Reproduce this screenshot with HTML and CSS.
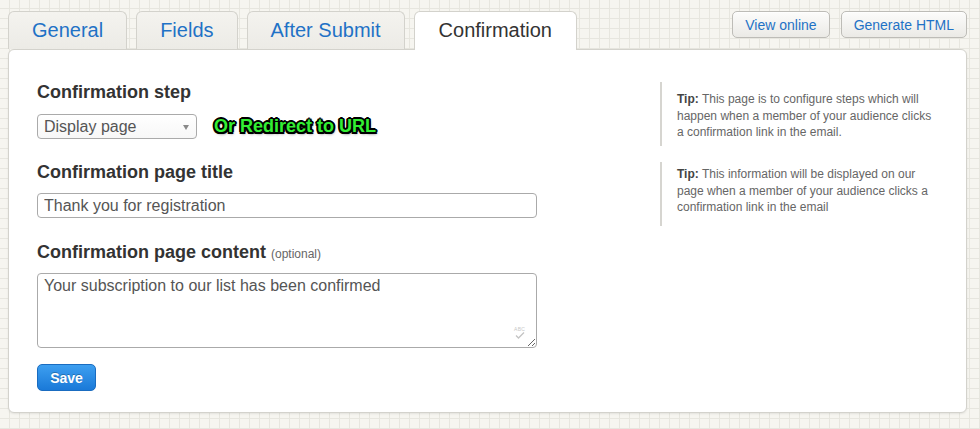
FILE: index.html
```html
<!DOCTYPE html>
<html lang="en">
<head>
<meta charset="utf-8">
<title>Confirmation</title>
<link rel="stylesheet" href="styles.css">
</head>
<body>
<div class="page">
  <div class="topbar">
    <nav class="tabs">
      <a class="tab">General</a>
      <a class="tab">Fields</a>
      <a class="tab">After Submit</a>
      <a class="tab active">Confirmation</a>
    </nav>
    <div class="actions">
      <button class="btn">View online</button>
      <button class="btn">Generate HTML</button>
    </div>
  </div>
  <section class="panel">
    <div class="form">
      <h3 class="field-label">Confirmation step</h3>
      <div class="step-row">
        <div class="select-wrap">
          <select class="select"><option>Display page</option></select>
        </div>
        <span class="redirect">Or Redirect to URL</span>
      </div>
      <h3 class="field-label">Confirmation page title</h3>
      <input class="text-input" type="text" value="Thank you for registration">
      <h3 class="field-label">Confirmation page content <span class="optional">(optional)</span></h3>
      <div class="textarea-wrap">
        <textarea class="textarea">Your subscription to our list has been confirmed</textarea>
        <span class="spell"><span class="spell-abc">ABC</span><svg width="10" height="7" viewBox="0 0 10 7"><path d="M1 3.5 L3.5 6 L9 0.5" fill="none" stroke="#c4c4c4" stroke-width="1.3"/></svg></span>
      </div>
      <button class="save">Save</button>
    </div>
    <aside class="tips">
      <p class="tip"><b>Tip:</b> This page is to configure steps which will happen when a member of your audience clicks a confirmation link in the email.</p>
      <p class="tip tip-second"><b>Tip:</b> This information will be displayed on our page when a member of your audience clicks a confirmation link in the email</p>
    </aside>
  </section>
</div>
</body>
</html>
```
FILE: styles.css
```css
* { box-sizing: border-box; }
html, body { margin: 0; padding: 0; }
body {
  font-family: "Liberation Sans", Arial, Helvetica, sans-serif;
  background-color: #f6f5f0;
  background-image:
    linear-gradient(to right, #e7e6df 1px, transparent 1px),
    linear-gradient(to bottom, #e7e6df 1px, transparent 1px);
  background-size: 10px 10px;
  background-position: 9px 8px;
  height: 429px;
  overflow: hidden;
}
.page {
  padding: 11px 13px 0 8px;
}
.topbar {
  display: flex;
  justify-content: space-between;
  align-items: flex-start;
  height: 38px;
  position: relative;
  z-index: 2;
}
.tabs {
  display: flex;
  gap: 9px;
  align-items: flex-end;
  height: 38px;
}
.tab {
  display: block;
  height: 38px;
  padding: 0 23px;
  line-height: 36px;
  font-size: 20px;
  color: #1f72c6;
  background: linear-gradient(#f4f3ef, #ecebe6);
  border: 1px solid #d3d2cc;
  border-bottom: none;
  border-radius: 6px 6px 0 0;
  cursor: pointer;
}
.tab.active {
  height: 39px;
  margin-bottom: -1px;
  background: #fff;
  color: #333;
  padding: 0 24px;
}
.actions {
  display: flex;
  gap: 11px;
}
.btn {
  height: 27px;
  padding: 0 12px;
  font-family: inherit;
  font-size: 14px;
  color: #1f72c6;
  background: linear-gradient(#fcfcfb, #ebeae6);
  border: 1px solid #bdbcb7;
  border-radius: 5px;
  box-shadow: 0 1px 0 rgba(255,255,255,0.8) inset;
  cursor: pointer;
}
.panel {
  position: relative;
  z-index: 1;
  display: flex;
  align-items: flex-start;
  background: #fff;
  border: 1px solid #d3d2cc;
  border-radius: 6px;
  padding: 32px 28px 21px 28px;
  box-shadow: 0 1px 2px rgba(0,0,0,0.08);
}
.form {
  width: 500px;
  display: flex;
  flex-direction: column;
  align-items: flex-start;
}
.field-label {
  margin: 0 0 11px 0;
  height: 20px;
  font-size: 18px;
  line-height: 20px;
  font-weight: bold;
  color: #333;
}
.optional {
  font-size: 12px;
  line-height: 12px;
  font-weight: normal;
  color: #666;
}
.step-row {
  display: flex;
  align-items: center;
  margin: 1px 0 23px 0;
}
.select-wrap {
  position: relative;
  width: 160px;
  height: 25px;
}
.select-wrap::after {
  content: "";
  position: absolute;
  right: 8px;
  top: 11px;
  border-left: 3.5px solid transparent;
  border-right: 3.5px solid transparent;
  border-top: 5px solid #8a8a8a;
  pointer-events: none;
}
.select {
  -webkit-appearance: none;
  appearance: none;
  width: 160px;
  height: 25px;
  padding: 0 20px 0 6px;
  font-family: inherit;
  font-size: 16px;
  color: #555;
  background: linear-gradient(#fff, #f7f7f7);
  border: 1px solid #aaa;
  border-radius: 4px;
}
.redirect {
  margin-left: 17px;
  font-size: 18px;
  font-weight: bold;
  letter-spacing: 0;
  color: #33ee33;
  text-shadow:
    -1.5px -1.5px 0 #000, 1.5px -1.5px 0 #000, -1.5px 1.5px 0 #000, 1.5px 1.5px 0 #000,
    0 -2px 0 #000, 0 2px 0 #000, -2px 0 0 #000, 2px 0 0 #000,
    1px 2px 3px rgba(0,0,0,0.6);
}
.text-input {
  width: 500px;
  height: 25px;
  margin: 0 0 24px 0;
  padding: 0 6px;
  font-family: inherit;
  font-size: 16px;
  color: #555;
  border: 1px solid #aaa;
  border-radius: 4px;
  background: #fff;
}
.textarea-wrap {
  position: relative;
  width: 500px;
  height: 75px;
  margin-bottom: 16px;
}
.textarea {
  display: block;
  width: 500px;
  height: 75px;
  margin: 0;
  padding: 2px 6px;
  font-family: inherit;
  font-size: 16px;
  line-height: 20px;
  color: #555;
  border: 1px solid #aaa;
  border-radius: 4px;
  resize: both;
}
.spell {
  position: absolute;
  right: 12px;
  bottom: 9px;
  display: flex;
  flex-direction: column;
  align-items: center;
  line-height: 6px;
  pointer-events: none;
}
.spell-abc {
  font-size: 5px;
  color: #c8c8c8;
  letter-spacing: 0.2px;
}
.save {
  width: 59px;
  height: 27px;
  padding: 0;
  font-family: inherit;
  font-size: 14px;
  font-weight: bold;
  color: #fff;
  background: linear-gradient(#3d9ff0, #1a79d8);
  border: 1px solid #1a6cc0;
  border-radius: 5px;
  text-shadow: 0 -1px 0 rgba(0,0,0,0.25);
  cursor: pointer;
}
.tips {
  margin-left: 123px;
  width: 290px;
}
.tip {
  margin: 0 0 16px 0;
  height: 64px;
  padding: 9px 0 0 15px;
  border-left: 2px solid #d6d5d0;
  font-size: 12px;
  line-height: 16.5px;
  color: #666;
}
.tip-second {
  padding-top: 4px;
}
.tip b {
  color: #444;
}
```
